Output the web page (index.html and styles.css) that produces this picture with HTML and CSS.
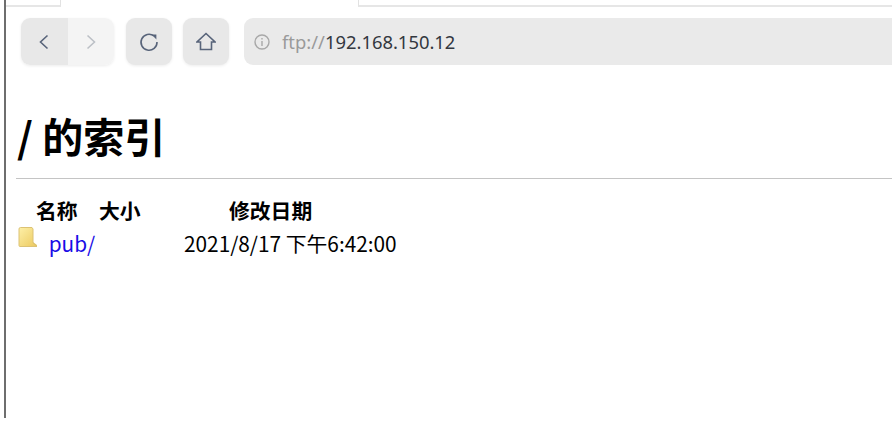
FILE: index.html
```html
<!DOCTYPE html>
<html lang="zh-CN">
<head>
<meta charset="UTF-8" />
<title>/ 的索引</title>
<link rel="stylesheet" href="styles.css">
</head>
<body>

<div class="window">
  <div class="tabstrip">
    <div class="tab-left"></div>
    <div class="tab-active"></div>
    <div class="tab-rest"></div>
  </div>

  <div class="toolbar">
    <div class="btn-group">
      <div class="btn">
        <svg width="18" height="18" viewBox="0 0 18 18"><path d="M12.5 2.5 L5.5 9 L12.5 15.5" class="ico"/></svg>
      </div>
      <div class="btn disabled">
        <svg width="18" height="18" viewBox="0 0 18 18"><path d="M5.5 2.5 L12.5 9 L5.5 15.5" class="ico"/></svg>
      </div>
    </div>
    <div class="btn single">
      <svg width="20" height="20" viewBox="0 0 20 20"><path d="M15 4 A8 8 0 1 0 18 10" class="ico"/><path d="M12.6 2.6 L17.4 2.6 L17.4 7.4 Z" class="ico-fill"/></svg>
    </div>
    <div class="btn single">
      <svg width="20" height="20" viewBox="0 0 20 20"><path d="M10 1.5 L19 10 L15.5 10 L15.5 17.5 L4.5 17.5 L4.5 10 L1 10 Z" class="ico"/></svg>
    </div>
    <div class="urlbar">
      <svg width="16" height="16" viewBox="0 0 16 16"><circle cx="8" cy="8" r="7" class="info"/><path d="M8 7 L8 12 M8 4 L8 5.4" class="info"/></svg>
      <span class="url"><span class="scheme">ftp://</span>192.168.150.12</span>
    </div>
  </div>

  <h1>/ 的索引</h1>
  <hr>

  <table>
    <thead>
      <tr>
        <th class="col-name">名称</th>
        <th class="col-size">大小</th>
        <th class="col-date">修改日期</th>
      </tr>
    </thead>
    <tbody>
      <tr>
        <td class="col-name">
          <svg class="folder" width="20" height="21" viewBox="0 0 20 21">
            <defs>
              <linearGradient id="fold" x1="0" y1="0" x2="1" y2="1">
                <stop offset="0" stop-color="#fdf0a8"/>
                <stop offset="1" stop-color="#ecc95e"/>
              </linearGradient>
            </defs>
            <path d="M15 5 L15 15 L19 18 L19 20 L3 20 Z" fill="#e6c866"/>
            <path d="M1 2 Q1 .5 2.5 .5 L14 .5 L15 2 L15 16 L19 19.5 L2 19.5 Q1 19.5 1 18.5 Z" fill="url(#fold)" stroke="#dcc274"/>
          </svg>
          <a href="#">pub/</a>
        </td>
        <td class="col-size"></td>
        <td class="col-date">2021/8/17 下午6:42:00</td>
      </tr>
    </tbody>
  </table>
</div>

</body>
</html>
```

FILE: styles.css
```css
html, body { margin: 0; padding: 0; background: #fff; }
body { width: 892px; height: 447px; overflow: hidden; font-family: "Noto Sans CJK SC", "Liberation Sans", sans-serif; color: #000; }

.window { height: 418px; margin-left: 4px; border-left: 2px solid #6e6e6e; box-sizing: border-box; overflow: hidden; }

.tabstrip { display: flex; height: 7px; }
.tab-left { width: 55px; border-right: 1px solid #e2e2e2; border-bottom: 2px solid #e6e6e6; box-sizing: border-box; }
.tab-active { width: 297px; }
.tab-rest { flex: 1; border-left: 1px solid #e2e2e2; border-bottom: 2px solid #e6e6e6; box-sizing: border-box; }

.toolbar { display: flex; align-items: center; gap: 11px; height: 47px; margin-top: 11px; padding-left: 15px; }
.btn-group { display: flex; margin-right: 1px; border-radius: 9px; overflow: hidden; box-shadow: 0 1px 3px rgba(0,0,0,.08); }
.btn { width: 46.5px; height: 47px; background: #e8e8e8; display: flex; align-items: center; justify-content: center; }
.btn.disabled { background: #f4f4f4; }
.btn.disabled .ico { stroke: #bcc0c6; }
.btn.single { width: 46px; border-radius: 9px; box-shadow: 0 1px 3px rgba(0,0,0,.08); }
.ico { fill: none; stroke: #58647a; stroke-width: 1.6; }
.ico-fill { fill: #58647a; }
.info { fill: none; stroke: #a8a8a8; stroke-width: 1.4; }

.urlbar { flex: 1; height: 47px; margin-left: 4px; background: #eaeaea; border-radius: 9px 0 0 9px; display: flex; align-items: center; gap: 12px; padding-left: 10px; }
.url { font-family: "Noto Sans", sans-serif; font-size: 18.4px; color: #33383f; }
.scheme { color: #9a9a9a; }

h1 { font-size: 41px; font-weight: bold; line-height: 44px; margin: 48px 0 21px 11px; }
hr { height: 1px; border: 0; background: #c4c4c4; margin: 0 0 0 10px; }

table { border-collapse: collapse; margin: 15px 0 0 10px; font-size: 20.8px; }
th { font-weight: bold; padding: 0; height: 32px; }
td { padding: 0; height: 34px; }
.col-name { width: 83px; text-align: left; padding-left: 20px; box-sizing: border-box; }
td.col-name { padding-left: 0; }
.col-size { width: 85px; text-align: left; }
.col-date { font-weight: normal; text-align: left; }
th.col-date { font-weight: bold; padding-left: 45px; }
.folder { vertical-align: top; margin-left: 2px; margin-right: 6px; margin-top: -1px; }
a { color: #1a0de6; text-decoration: none; }
```
